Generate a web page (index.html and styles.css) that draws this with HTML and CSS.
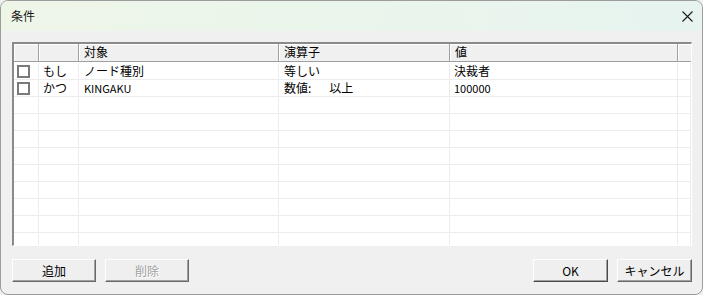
FILE: index.html
```html
<!DOCTYPE html>
<html lang="ja">
<head>
    <meta charset="UTF-8">
    <title>条件</title>
    <link rel="stylesheet" href="styles.css">
</head>
<body>
    <div class="window">
        <div class="titlebar">
            <span class="title">条件</span>
            <svg class="close" width="11" height="11" viewBox="0 0 11 11">
                <path d="M0.5 0.5 L10.5 10.5 M10.5 0.5 L0.5 10.5" stroke="#1a1a1a" stroke-width="1.1" fill="none"/>
            </svg>
        </div>

        <div class="content">
            <div class="grid">
                <div class="row head">
                    <div class="cell"></div>
                    <div class="cell"></div>
                    <div class="cell">対象</div>
                    <div class="cell">演算子</div>
                    <div class="cell">値</div>
                    <div class="cell filler"></div>
                </div>
                <div class="rows">
                    <div class="row">
                        <div class="cell"><span class="check"></span></div>
                        <div class="cell">もし</div>
                        <div class="cell">ノード種別</div>
                        <div class="cell">等しい</div>
                        <div class="cell">決裁者</div>
                        <div class="cell filler"></div>
                    </div>
                    <div class="row">
                        <div class="cell"><span class="check"></span></div>
                        <div class="cell">かつ</div>
                        <div class="cell latin">KINGAKU</div>
                        <div class="cell">数値:<span class="op">以上</span></div>
                        <div class="cell latin">100000</div>
                        <div class="cell filler"></div>
                    </div>
                    <div class="row"><div class="cell"></div><div class="cell"></div><div class="cell"></div><div class="cell"></div><div class="cell"></div><div class="cell filler"></div></div>
                    <div class="row"><div class="cell"></div><div class="cell"></div><div class="cell"></div><div class="cell"></div><div class="cell"></div><div class="cell filler"></div></div>
                    <div class="row"><div class="cell"></div><div class="cell"></div><div class="cell"></div><div class="cell"></div><div class="cell"></div><div class="cell filler"></div></div>
                    <div class="row"><div class="cell"></div><div class="cell"></div><div class="cell"></div><div class="cell"></div><div class="cell"></div><div class="cell filler"></div></div>
                    <div class="row"><div class="cell"></div><div class="cell"></div><div class="cell"></div><div class="cell"></div><div class="cell"></div><div class="cell filler"></div></div>
                    <div class="row"><div class="cell"></div><div class="cell"></div><div class="cell"></div><div class="cell"></div><div class="cell"></div><div class="cell filler"></div></div>
                    <div class="row"><div class="cell"></div><div class="cell"></div><div class="cell"></div><div class="cell"></div><div class="cell"></div><div class="cell filler"></div></div>
                    <div class="row"><div class="cell"></div><div class="cell"></div><div class="cell"></div><div class="cell"></div><div class="cell"></div><div class="cell filler"></div></div>
                    <div class="row"><div class="cell"></div><div class="cell"></div><div class="cell"></div><div class="cell"></div><div class="cell"></div><div class="cell filler"></div></div>
                </div>
            </div>

            <div class="buttons">
                <div class="left">
                    <button class="btn wide">追加</button>
                    <button class="btn wide" disabled>削除</button>
                </div>
                <div class="right">
                    <button class="btn default">OK</button>
                    <button class="btn">キャンセル</button>
                </div>
            </div>
        </div>
    </div>
</body>
</html>
```

FILE: styles.css
```css
* {
    margin: 0;
    padding: 0;
    box-sizing: border-box;
}

body {
    font-family: "Noto Sans CJK JP", "Noto Sans", sans-serif;
    font-size: 12px;
    color: #000;
    background: #f0f0f0;
}

.window {
    width: 703px;
    height: 295px;
    border: 1px solid #9c9c9c;
    border-radius: 8px;
    overflow: hidden;
    background: #f0f0f0;
}

.titlebar {
    height: 30px;
    display: flex;
    align-items: center;
    justify-content: space-between;
    padding: 0 9px 0 10px;
    background: linear-gradient(90deg, #eef6e8, #e9f5ec 60%, #e7f3ef);
}

.title {
    font-size: 12px;
    line-height: 16px;
    color: #1a1a1a;
}

.content {
    padding: 11px 10px 0 11px;
}

/* 条件グリッド */
.grid {
    width: 680px;
    height: 204px;
    border-top: 2px solid #8a8a8a;
    border-left: 2px solid #8a8a8a;
    border-right: 1px solid #fff;
    border-bottom: 1px solid #fff;
    background: #fff;
    overflow: hidden;
}

.row {
    display: grid;
    grid-template-columns: 25px 40px 200px 171px 228px 1fr;
    height: 17px;
}

.head {
    height: 18px;
    background: #f0f0f0;
}

.head .cell {
    border-right: 1px solid #a0a0a0;
    border-bottom: 1px solid #a0a0a0;
    box-shadow: inset 1px 1px 0 #fff;
    padding-left: 5px;
}

.head .filler {
    border-right: none;
}

.rows {
    padding-top: 1px;
}

.cell {
    border-right: 1px solid #ececec;
    border-bottom: 1px solid #ececec;
    line-height: 16px;
    padding-left: 5px;
    white-space: nowrap;
    overflow: hidden;
}

.rows .cell:nth-child(2) {
    padding-left: 4px;
}

.rows .cell:nth-child(5) {
    padding-left: 4px;
}

.cell.latin {
    font-size: 11px;
}

.op {
    margin-left: 18px;
}

.check {
    display: block;
    width: 13px;
    height: 13px;
    margin: 2px 0 0 -2px;
    border: 2px solid #7a7a7a;
    background: #fff;
}

/* ボタン */
.buttons {
    display: flex;
    justify-content: space-between;
    margin-top: 13px;
}

.left,
.right {
    display: flex;
    gap: 9px;
}

.btn {
    width: 75px;
    height: 23px;
    font-family: inherit;
    font-size: 12px;
    color: #000;
    background: #efefef;
    border: 1px solid;
    border-color: #fff #696969 #696969 #fff;
    box-shadow: inset -1px -1px 0 #a0a0a0;
}

.btn.wide {
    width: 84px;
}

.btn:disabled {
    color: #a0a0a0;
    text-shadow: 1px 1px 0 #fff;
}

.btn.default {
    border-right-color: #4a4a4a;
    border-bottom-color: #4a4a4a;
}
```
